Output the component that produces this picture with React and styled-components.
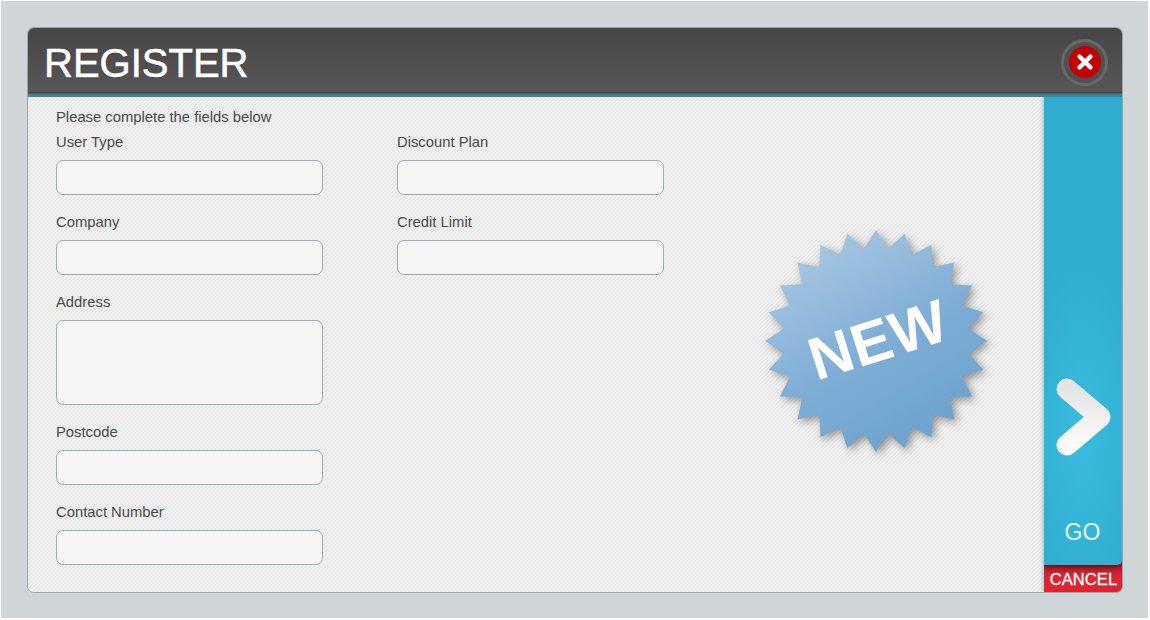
import React from "react"
import styled, { createGlobalStyle } from "styled-components"

const GlobalStyle = createGlobalStyle`
  html, body, #root {
    height: 100%;
    margin: 0;
  }
  body {
    background: #fff;
    font-family: "Liberation Sans", Arial, sans-serif;
    overflow: hidden;
  }
`

const Backdrop = styled.div`
  box-sizing: border-box;
  height: calc(100vh - 3px);
  margin: 1px 2px 2px 1px;
  padding: 26px 25px 25px 26px;
  background: #d0d5d7;
  display: flex;
`
const Panel = styled.div`
  flex: 1;
  display: flex;
  flex-direction: column;
  border: 1px solid #8eaaaa;
  border-radius: 7px;
  overflow: hidden;
`
const Header = styled.header`
  flex: none;
  box-sizing: border-box;
  height: 69px;
  padding: 0 14px 0 16px;
  display: flex;
  align-items: center;
  justify-content: space-between;
  background: linear-gradient(#464646, #575757);
  border-bottom: 3px solid #3b8599;
  box-shadow: inset 0 -1px 0 #5c5c5c, inset 0 -2px 0 #444;
`
const Title = styled.h1`
  margin: 4px 0 0;
  font-size: 40px;
  font-weight: 400;
  line-height: 46px;
  color: #fff;
  -webkit-text-stroke: 0.6px #fff;
  text-shadow: 0 1px 1px rgba(0, 0, 0, 0.3);
`
const CloseRing = styled.button`
  box-sizing: border-box;
  width: 47px;
  height: 47px;
  padding: 0;
  margin-top: 2px;
  border: 3px solid #686868;
  border-radius: 50%;
  background: #505050;
  display: flex;
  align-items: center;
  justify-content: center;
  cursor: pointer;
`
const CloseDisc = styled.span`
  width: 32px;
  height: 32px;
  border-radius: 50%;
  background: #c40000;
  display: flex;
  align-items: center;
  justify-content: center;
`
const Body = styled.div`
  flex: 1;
  min-height: 0;
  display: flex;
`
const Main = styled.main`
  flex: 1;
  display: flex;
  background-image: linear-gradient(
    135deg,
    #f1f1f1 25%,
    #e8e8e8 25%,
    #e8e8e8 50%,
    #f1f1f1 50%,
    #f1f1f1 75%,
    #e8e8e8 75%
  );
  background-size: 4px 4px;
`
const FormArea = styled.form`
  flex: none;
  padding: 10px 0 0 28px;
`
const Intro = styled.p`
  margin: 0 0 4px;
  font-size: 14.8px;
  line-height: 20px;
  color: #4a4a4a;
`
const Columns = styled.div`
  display: grid;
  grid-template-columns: 267px 267px;
  column-gap: 74px;
  align-items: start;
`
const Field = styled.label`
  display: block;
  margin-bottom: 16px;
`
const FieldName = styled.span`
  display: block;
  padding-top: 1px;
  margin-bottom: 8px;
  font-size: 14.8px;
  line-height: 20px;
  color: #4a4a4a;
`
const Input = styled.input`
  display: block;
  box-sizing: border-box;
  width: 100%;
  height: ${(p) => p.$height || 35}px;
  background: #f6f4f4;
  border: 1px solid #94b0b0;
  border-radius: 7px;
  outline: 0;
`
const BadgeSlot = styled.div`
  flex: 1;
  display: flex;
  align-items: center;
  justify-content: center;
  padding: 0 0 7px 44px;
`
const Badge = styled.svg`
  display: block;
  overflow: visible;
  filter: drop-shadow(3px 3px 4px rgba(0, 0, 0, 0.4));
`
const BadgeText = styled.text`
  font-family: "Liberation Sans", Arial, sans-serif;
  font-size: 60px;
  font-weight: 700;
  letter-spacing: 0.6px;
  fill: #fff;
`
const Actions = styled.aside`
  flex: none;
  width: 78px;
  display: flex;
  flex-direction: column;
  overflow: hidden;
  box-shadow: -2px 0 3px rgba(60, 150, 180, 0.35);
  background: #d9222f;
`
const GoButton = styled.button`
  flex: 1;
  padding: 0 1px 19px 0;
  border: 0;
  border-radius: 0 0 5px 0;
  background: radial-gradient(ellipse 62px 190px at 50% 72%, #38bcdf 0%, #2faccf 100%);
  box-shadow: 0 2px 5px rgba(70, 0, 0, 0.7);
  position: relative;
  display: flex;
  flex-direction: column;
  align-items: center;
  justify-content: flex-end;
  color: #e9f7fb;
  font-family: inherit;
  font-size: 23px;
  line-height: 28px;
  cursor: pointer;
`
const GoArrow = styled.svg`
  display: block;
  margin: 0 0 62px 0;
`
const CancelButton = styled.button`
  flex: none;
  height: 27px;
  padding: 2px 0 0 1px;
  border: 0;
  background: linear-gradient(#a81f2c, #de2431 45%);
  color: #fff;
  font-family: inherit;
  font-size: 16.5px;
  letter-spacing: 0.1px;
  -webkit-text-stroke: 0.3px #fff;
  cursor: pointer;
`

// 24 point seal, tips on radius 111 and notches on radius 93
const starPoints = Array.from({ length: 48 }, (_, i) => {
  const r = i % 2 === 0 ? 111 : 93
  const a = (i * Math.PI) / 24
  return `${(120 + r * Math.sin(a)).toFixed(2)},${(120 - r * Math.cos(a)).toFixed(2)}`
}).join(" ")

const leftFields = [
  { name: "User Type" },
  { name: "Company" },
  { name: "Address", area: true },
  { name: "Postcode" },
  { name: "Contact Number" },
]
const rightFields = [{ name: "Discount Plan" }, { name: "Credit Limit" }]

const FieldList = ({ fields }) => (
  <div>
    {fields.map((f) => (
      <Field key={f.name}>
        <FieldName>{f.name}</FieldName>
        {f.area ? <Input as="textarea" $height={85} style={{ resize: "none" }} /> : <Input type="text" />}
      </Field>
    ))}
  </div>
)

export default function App() {
  return (
    <>
      <GlobalStyle />
      <Backdrop>
        <Panel>
          <Header>
            <Title>REGISTER</Title>
            <CloseRing type="button" aria-label="Close">
              <CloseDisc>
                <svg width="18" height="18" viewBox="0 0 18 18">
                  <path d="M3.5 3.5 L14.5 14.5 M14.5 3.5 L3.5 14.5" stroke="#fff" strokeWidth="4.4" strokeLinecap="round" />
                </svg>
              </CloseDisc>
            </CloseRing>
          </Header>
          <Body>
            <Main>
              <FormArea>
                <Intro>Please complete the fields below</Intro>
                <Columns>
                  <FieldList fields={leftFields} />
                  <FieldList fields={rightFields} />
                </Columns>
              </FormArea>
              <BadgeSlot>
                <Badge width="240" height="240" viewBox="0 0 240 240">
                  <defs>
                    <linearGradient id="seal" x1="0.15" y1="0" x2="0.75" y2="1">
                      <stop offset="0" stopColor="#adcae3" />
                      <stop offset="0.55" stopColor="#7eadd5" />
                      <stop offset="1" stopColor="#6aa1cd" />
                    </linearGradient>
                  </defs>
                  <polygon points={starPoints} fill="url(#seal)" />
                  <BadgeText x="122" y="119" textAnchor="middle" dominantBaseline="central" transform="rotate(-17.5 122 119)">
                    NEW
                  </BadgeText>
                </Badge>
              </BadgeSlot>
            </Main>
            <Actions>
              <GoButton type="submit">
                <GoArrow width="78" height="78" viewBox="0 0 78 78">
                  <defs>
                    <linearGradient id="arrow" x1="0" y1="0" x2="0" y2="1">
                      <stop offset="0" stopColor="#e4e4e4" />
                      <stop offset="1" stopColor="#fbfbfb" />
                    </linearGradient>
                  </defs>
                  <path
                    d="M23 11 L56 39 L23 67"
                    fill="none"
                    stroke="url(#arrow)"
                    strokeWidth="21"
                    strokeLinecap="round"
                    strokeLinejoin="round"
                  />
                </GoArrow>
                GO
              </GoButton>
              <CancelButton type="button">CANCEL</CancelButton>
            </Actions>
          </Body>
        </Panel>
      </Backdrop>
    </>
  )
}
